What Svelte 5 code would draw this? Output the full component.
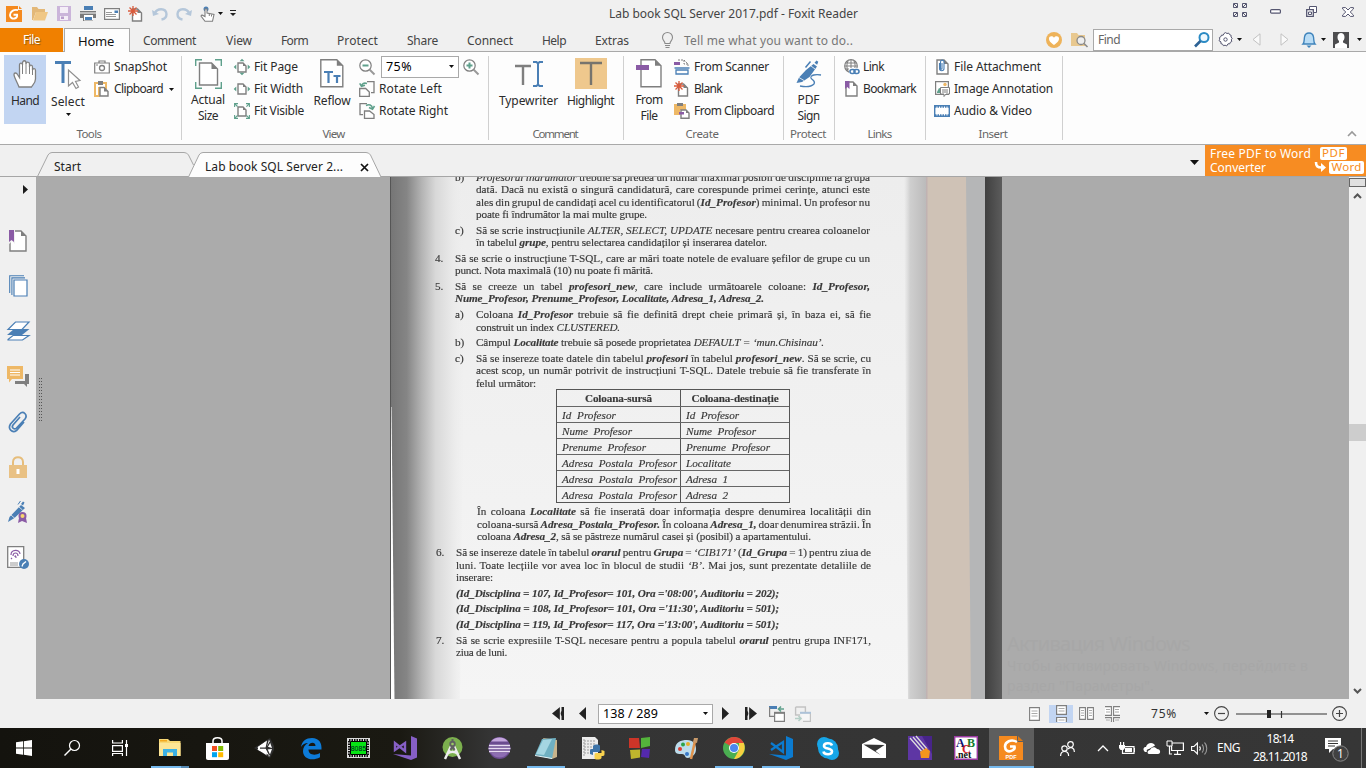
<script>
  const G = '#7f7f7f', B = '#4a7fb5', P = '#8a5ba5', T = '#5fa08c', O = '#eeb866';
  const page = (x, y, w, h, f = 5) =>
    `<path d="M${x} ${y}h${w - f}l${f} ${f}v${h - f}h${-w}z" fill="#fff" stroke="${G}" stroke-width="1.4"/><path d="M${x + w - f} ${y}v${f}h${f}z" fill="${G}"/>`;
  const caret = '<path d="M0 0h5L2.5 3z" fill="#111"/>';

  // name: [width, height, markup]
  const icons = {
    caret: [5, 3, caret],
    logo: [16, 16, `<path d="M0 0h12v4h4v12H0z" fill="#f58a1f"/><path d="M13 0l3 3h-3z" fill="#f58a1f"/><path d="M12 4.2C8 3 4 5.500 4 9c0 2.500 2 4 4.500 3.500 2-.4 3-2 2.600-3.800H7.500" fill="none" stroke="#fff" stroke-width="1.900"/>`],
    open: [16, 16, `<path d="M0 1h5l1.500 2H13v3H4L1 14H0z" fill="#e3b878"/><path d="M4 6h12l-3 8.500H1z" fill="#f0c785"/>`],
    save: [15, 15, `<path d="M1 0h14v15H1z" fill="#cbb5da"/><path d="M4 1h8v6H4zM4 10h8v4H4z" fill="#f4eef7"/><path d="M5 10.500h3V13H5z" fill="#b99dcb"/>`],
    print: [16, 16, `<path d="M4 0h9v4H4z" fill="#4a7fb5"/><path d="M0 5h16v7h-3v3H3v-3H0z" fill="#7a7a7a"/><path d="M4 9h9v5.500H4z" fill="#fff"/><path d="M5 11h7v3H5z" fill="#4a7fb5"/><path d="M0 7h16" stroke="#fff"/>`],
    mail: [16, 12, `<path d="M.6.600h14.800v10.800H.6z" fill="#fff" stroke="${G}" stroke-width="1.200"/><path d="M10.500 2.500H14V5h-3.500z" fill="${B}"/><path d="M2 4.500h6M2 6.500h10M2 8.500h10" stroke="#999"/>`],
    newdoc: [15, 16, page(4.5, 3, 9, 12, 4) + `<path d="M0 5h10M5 0v10M1.500 1.500l7 7M8.500 1.500l-7 7" stroke="#d95b3c" stroke-width="1.300"/>`],
    undo: [16, 16, `<path d="M3 7C5 2 14 1.500 14.500 8c0 3-2 5-5 5.500" fill="none" stroke="#b5c7da" stroke-width="2.400"/><path d="M0 4l1 6 6-2z" fill="#b5c7da"/>`],
    redo: [16, 16, `<path d="M13 7C11 2 2 1.500 1.500 8c0 3 2 5 5 5.500" fill="none" stroke="#b5c7da" stroke-width="2.400"/><path d="M16 4l-1 6-6-2z" fill="#b5c7da"/>`],
    touch: [15, 16, `<circle cx="6" cy="3" r="2.500" fill="${B}"/><path d="M5 3v7.500L2 9 1 10l4 5.300h7.500L14 8.500 7 7V3z" fill="#fff" stroke="${G}" stroke-width="1.100"/><path d="M9.300 8v2M11.500 8.500v2" stroke="${G}"/>`],
    custom: [6, 7, '<path d="M0 .5h6" stroke="#222"/><path d="M0 3h6L3 6z" fill="#222"/>'],
    full: [14, 14, '<g fill="none" stroke="#555670" stroke-width="1"><path d="M.5.500h4v4h-4zM9.500.500h4v4h-4zM.5 9.500h4v4h-4zM9.500 9.500h4v4h-4zM1 1l3 3M13 1l-3 3M1 13l3-3M13 13l-3-3"/></g>'],
    min: [11, 5, '<rect x=".6" y=".6" width="9.800" height="3.600" rx="1" fill="#fff" stroke="#555670" stroke-width="1.200"/>'],
    restore: [11, 11, '<path d="M3.500 3V.5h7v6H8" fill="#fff" stroke="#555670"/><path d="M.7 3.700h6.600v6.600H.7z" fill="#fff" stroke="#555670" stroke-width="1.300"/><path d="M2.500 6h3v2.500h-3z" fill="none" stroke="#555670"/>'],
    close: [12, 10, '<path d="M.6.600h3L6 3 8.400.600h3V2L8.200 5l3.200 3v1.400h-3L6 7 3.600 9.400h-3V8L3.800 5 .6 2z" fill="#fff" stroke="#555670"/>'],
    bulb: [13, 17, '<path d="M4 11.500C4 9 1.500 8.500 1.500 5.500a5 5 0 0 1 10 0C11.500 8.500 9 9 9 11.500zM4 13.500h5M4.500 15.500h4" fill="none" stroke="#8a8a8a" stroke-width="1.100"/>'],
    heart: [16, 16, '<circle cx="8" cy="8" r="8" fill="#eeb35a"/><path d="M8 13C4 10 3 8.500 3 6.500 3 4 6.500 3.500 8 5.800 9.500 3.500 13 4 13 6.500 13 8.500 12 10 8 13z" fill="#fff"/>'],
    fsearch: [17, 16, '<path d="M0 1h6l1.500 2H14v11H0z" fill="#e8c88f"/><circle cx="10" cy="8.500" r="4" fill="#eee" stroke="#8a8a8a" stroke-width="1.300"/><path d="M13 11.500l3.500 3.500" stroke="#8a8a8a" stroke-width="1.600"/>'],
    find: [16, 16, '<circle cx="10" cy="5.500" r="4.500" fill="#eff8fe" stroke="#2a8ac4" stroke-width="2"/><path d="M6.500 9L1 14.500" stroke="#2d6295" stroke-width="2.600"/>'],
    gear: [15, 15, '<path d="M6 1.500L7.500.600 9 1.500l1.700-.4.8 1.500 1.600.7-.1 1.700 1.200 1.300-.9 1.500.5 1.700-1.500.8-.6 1.600-1.700-.1L8.600 14l-1.500-.8-1.700.5-.8-1.500-1.700-.6.1-1.700L1 8.700l.8-1.500-.4-1.700 1.500-.8.600-1.600 1.700.1z" fill="#fff" stroke="#555670" stroke-width="1"/><circle cx="7.500" cy="7.500" r="1.700" fill="none" stroke="#555670"/>'],
    triL: [9, 13, '<path d="M8 .8v11.400L1 6.500z" fill="#fafafa" stroke="#c2c2c2"/>'],
    triR: [9, 13, '<path d="M1 .8v11.400l7-5.700z" fill="#fafafa" stroke="#c2c2c2"/>'],
    bell: [14, 16, '<path d="M1 12c1.500-1.500 1-4 1.500-7 .4-2.500 2-4 4.500-4s4.100 1.500 4.500 4c.5 3 0 5.500 1.500 7z" fill="#b9dcf5" stroke="#3e83bb" stroke-width="1.400"/><path d="M4.500 13.500h5L7 16z" fill="#3e83bb"/>'],
    avatar: [16, 16, '<path d="M0 0h16v16H0z" fill="#4d4d4f"/><path d="M4.500 5C4.500-.2 11.500-.2 11.500 5c0 2-.6 3.200-1.500 4v1.500l4 2V16H2v-3.500l4-2V9c-.9-.8-1.500-2-1.500-4z" fill="#fff"/>'],
    hand: [24, 28, '<path d="M6 27C4 22 1 17 1 14.500c0-2 2.500-2 3.500 0l2 3V5c0-2.500 3-2.500 3 0V3c0-3 3.500-3 3.500 0v1c0-2.500 3.500-2.500 3.500 0v3c0-2.500 3-2.500 3 0v3c.5-2 3-2 3 .5V19c0 4-3 6-4 8z" fill="#fff" stroke="#808080" stroke-width="1.300"/><path d="M9.500 5v9M13 3.500V14M16.500 5v9M19.500 8v7" fill="none" stroke="#808080"/>'],
    select: [26, 28, `<path d="M0 1.500h16M8 1.500V22" stroke="${B}" stroke-width="3" fill="none"/><path d="M13.500 9v16l4-3.500 3.500 6 2.500-1.500-3-5.500 4.500-1z" fill="#fff" stroke="#8f8f8f" stroke-width="1.200"/>`],
    camera: [16, 14, `<path d="M.7 3h14.600v10H.7zM5 3V1h6v2" fill="#fff" stroke="${G}" stroke-width="1.200"/><circle cx="8" cy="8" r="2.500" fill="none" stroke="${G}" stroke-width="1.300"/><path d="M2 5h2" stroke="${G}"/>`],
    clip: [15, 16, `<path d="M1 2h11v5H5v8H1z" fill="#fff" stroke="${O}" stroke-width="2"/><path d="M4 0h5v4H4z" fill="${G}"/>` + page(6, 6.5, 8, 8.5, 4)],
    actual: [27, 30, `<path d="M.7 7V.7H7M20 .7h6.300V7M26.300 23v6.300H20M7 29.300H.7V23" fill="none" stroke="${T}" stroke-width="1.400"/>` + page(4.5, 4, 18, 22, 6)],
    fitpage: [16, 16, page(4, 4, 8, 9, 3) + `<path d="M8-.3l2.500 2.600h-5zM8 16.300l2.500-2.600h-5zM-.3 8l2.600-2.500v5zM16.300 8l-2.600-2.500v5z" fill="${T}"/>`],
    fitwidth: [16, 16, page(4, 3, 8, 10, 3) + `<path d="M-.3 8l2.600-2.500v5zM16.300 8l-2.600-2.500v5z" fill="${T}"/>`],
    fitvis: [16, 16, page(4, 4, 8, 9, 3) + `<path d="M.6 4V.6H4M.6.600L3.500 3.500M12 .6h3.400V4M15.400.600l-3 3M.6 12v3.400H4M.6 15.400l3-3M12 15.400h3.400V12M15.400 15.400l-3-3" fill="none" stroke="${T}" stroke-width="1.100"/>`],
    reflow: [24, 29, page(.8, .8, 22, 27, 6) + `<path d="M4 13h9M8.500 13v11M13.500 17h7M17 17v7" stroke="${B}" stroke-width="2.200"/>`],
    zout: [16, 16, `<circle cx="6.500" cy="6.500" r="5.700" fill="#fff" stroke="${G}" stroke-width="1.200"/><path d="M3.500 6.500h6" stroke="${T}" stroke-width="2"/><path d="M10.500 10.500l5 5" stroke="#999" stroke-width="2"/>`],
    zin: [16, 16, `<circle cx="6.500" cy="6.500" r="5.700" fill="#fff" stroke="${G}" stroke-width="1.200"/><path d="M3.500 6.500h6M6.500 3.500v6" stroke="${T}" stroke-width="2"/><path d="M10.500 10.500l5 5" stroke="#999" stroke-width="2"/>`],
    rotl: [16, 16, `<path d="M8 .7h7v11h-3" fill="none" stroke="${G}" stroke-width="1.300"/><path d="M.7 7.500h6l3.600 3.500v4.300H.7z" fill="#fff" stroke="${G}" stroke-width="1.300"/><path d="M2.500 5C3 2.500 5 1.500 8 2.500M.7 2.300l1.800 3L6 4.300" fill="none" stroke="${T}" stroke-width="1.600"/>`],
    rotr: [16, 16, `<path d="M8 .7H1v11h3" fill="none" stroke="${G}" stroke-width="1.300"/><path d="M5.500 8h5l4.500 3.500v3.800H5.500z" fill="#fff" stroke="${G}" stroke-width="1.300"/><path d="M7 2.500c3-1.500 6-1 6.500 3M10 4.500l3.500 1.800L15.500 3" fill="none" stroke="${T}" stroke-width="1.600"/>`],
    typew: [28, 26, `<path d="M0 5h16M8 5v19" stroke="${G}" stroke-width="2.400"/><path d="M23 1v24M18 1h3.500L23 2.500 24.500 1H28M18 25h3.500l1.500-1.500 1.500 1.500H28" fill="none" stroke="${B}" stroke-width="2"/>`],
    high: [32, 31, `<path d="M0 0h32v31H0z" fill="#efc88d"/><path d="M5 5h22M16 5v22" stroke="#77746d" stroke-width="2.400"/>`],
    fromfile: [26, 29, page(5, .8, 20, 27, 6) + `<path d="M0 6h13v5H0z" fill="${P}"/>`],
    scanner: [16, 16, `<path d="M4 1h6l4 4v2M10 1v4h4" fill="none" stroke="${G}" stroke-dasharray="2 1"/><path d="M0 3h6v3H0z" fill="${P}"/><path d="M.5 9h15M2 15V11h12v4zM.5 9h15" fill="none" stroke="${B}" stroke-width="1.300"/>`],
    fromclip: [16, 16, `<path d="M0 1h12v6H6v5H0z" fill="${O}"/><path d="M3 0h6v3H3z" fill="${G}"/>` + page(7, 7, 8, 8.300, 3) + `<path d="M5 9h5v2.500H5z" fill="${P}"/>`],
    sign: [26, 28, `<path d="M17.500 4l3.500 2.500-7.500 10.500-7.500 5-5.500 1 2.500-5.500 7-7.500zM18.500 2.800l2-2.300 1.800 1.200-1.200 3z" fill="${B}"/><path d="M3 17.500l5 3M15 6l4 3" stroke="#fff" stroke-width=".8"/><path d="M9.500 7.500L14.500 1.500" stroke="${B}" stroke-width="1.500"/><path d="M25 15c-5-1-11 0-10 3 1 2 5 3 3 6-3 3-9 3-14 2" fill="none" stroke="${B}" stroke-width="1.300"/>`],
    link: [17, 16, `<circle cx="8" cy="7" r="6.300" fill="#fff" stroke="${G}" stroke-width="1.200"/><path d="M8 1v12M2 7h12M3 4h10M3 10h10M5 2C3.500 5 3.500 9 5 12M11 2c1.500 3 1.500 6 0 10" fill="none" stroke="${G}"/><path d="M6 9h11v7H6z" fill="#fff"/><rect x="7" y="10.500" width="5" height="4" rx="2" fill="none" stroke="${B}" stroke-width="1.600"/><rect x="11" y="10.500" width="5" height="4" rx="2" fill="none" stroke="${B}" stroke-width="1.600"/>`],
    bookmark: [15, 16, page(3, 1, 11, 14, 4) + `<path d="M2 0h4.500v8L4.200 6 2 8z" fill="${P}"/>`],
    attach: [15, 16, page(3, 1, 11, 14, 4) + `<path d="M5.500 4v5.500c0 3 4.500 3 4.500 0V3c0-2.500-3.500-2.500-3.500 0v6.500c0 1 1.500 1 1.500 0V4" fill="none" stroke="${B}" stroke-width="1.100"/>`],
    image: [16, 16, `<path d="M1.600.600h12.800v12.800H1.600z" fill="#fff" stroke="${G}" stroke-width="1.200"/><path d="M3 11l2-4 3 1v4H3z" fill="${T}"/><circle cx="11" cy="3.500" r="1.700" fill="${O}"/><path d="M6.500 6.500h9v6.500H12l-2 2.500V13H6.500z" fill="#fff" stroke="${G}"/><path d="M8 9h6M8 11h6" stroke="${G}"/>`],
    video: [16, 12, `<path d="M.7.700h14.600v10.600H.7z" fill="#fff" stroke="${B}" stroke-width="1.400"/><path d="M1 1.800h14M1 10.200h14" stroke="${B}" stroke-width="2" stroke-dasharray="1.500 1"/>`],
    chev: [10, 6, '<path d="M1 5l4-4 4 4" fill="none" stroke="#999" stroke-width="1.600"/>'],
    play: [5, 9, '<path d="M0 0l5 4.500L0 9z" fill="#1c1c1c"/>'],
    sbook: [18, 22, page(1, 1, 16, 20, 5) + `<path d="M0 0h6v14L3 11 0 14z" fill="#f0f0f0"/><path d="M0 0h5v12l-2.500-2L0 12z" fill="${P}"/>`],
    spages: [19, 22, `<path d="M.7 18V.7H15M2.900 20V2.900H16" fill="none" stroke="${B}" stroke-width="1.100"/><path d="M5 5h13v16H5z" fill="#fff" stroke="${B}" stroke-width="1.200"/>`],
    slayers: [23, 20, `<path d="M1 18.500l5-4h16l-6.500 4.500H1z" fill="#fff" stroke="${B}" stroke-width="1.200"/><path d="M0 14l7-6h15.500L15 14z" fill="${B}"/><path d="M1 8.500L8.500 1H22l-7 7.500z" fill="#fff" stroke="${B}" stroke-width="1.200"/>`],
    scomm: [22, 21, `<path d="M18 8h4v10h-2v3l-3-3H8v-3h10z" fill="${G}"/><path d="M0 0h16v13H5l-3 3.500V13H0z" fill="${O}"/><path d="M3 4h10M3 6.500h10M3 9h10" stroke="#fff"/>`],
    sclip: [20, 22, `<path d="M12 6l-7 8c-2 3 1.500 5 3.500 3L17 8c3-4-1.500-9-5.500-5L2.500 13C-.5 17.500 4 22.500 8.500 19.500L16 11" fill="none" stroke="${B}" stroke-width="1.700"/>`],
    slock: [18, 22, `<path d="M4 10V6c0-6.500 10-6.500 10 0v4" fill="none" stroke="#e6bd7b" stroke-width="2"/><path d="M0 9h18v13H0z" fill="#e9c184"/><path d="M7.500 13h3v5h-3z" fill="#fff"/>`],
    ssign: [20, 22, `<path d="M0 21l1.500-5L13 4l4 3L6.500 17zM13 3l2-2.500 1.500 1-1.500 3z" fill="${B}"/><path d="M10 3.500L12.500 0" stroke="${B}"/><path d="M3 14l4 3.500M11 6l3.500 3" stroke="#f0f0f0" stroke-width=".8"/><path d="M11 17l-1 5 4-2 5 2-1-5z" fill="${P}"/><circle cx="14.500" cy="15" r="4" fill="${P}"/><circle cx="14.500" cy="15" r="2" fill="#f7d56f"/>`],
    sfinger: [22, 23, `<path d="M.7.700h16v20.600h-16z" fill="#fff" stroke="${G}" stroke-width="1.300"/><path d="M4 9c0-6 9-6 9-1M6 10c0-4 5-4 5 0M8 11c0-2 1-1 1 1M4 12l1 1" fill="none" stroke="${P}" stroke-width="1.200"/><path d="M3 17h8M3 19h8" stroke="#999"/><circle cx="17" cy="18" r="5" fill="${B}"/><path d="M15 20.500l1-2.500 3-2.500" stroke="#fff" stroke-width="1.300" fill="none"/>`],
    xclose: [9, 9, '<path d="M1 1l7 7M8 1L1 8" stroke="#111" stroke-width="1.700"/>'],
    bigcaret: [9, 5, '<path d="M0 0h9L4.500 5z" fill="#111"/>'],
    bend: [11, 12, '<path d="M1 1c0 4 1 5.500 6 5.500" fill="none" stroke="#fff" stroke-width="2.600"/><path d="M6 2l5 4.500L6 11z" fill="#fff"/>'],
    first: [12, 13, '<path d="M8 0v13L0 6.500zM12 0v13H9.500V9L8 6.500 9.500 4V0z" fill="#222"/><path d="M8.300 0v13" stroke="#f0f0f0" stroke-width=".8"/>'],
    prev: [7, 13, '<path d="M7 0v13L0 6.500z" fill="#222"/>'],
    next: [7, 13, '<path d="M0 0v13l7-6.500z" fill="#222"/>'],
    last: [12, 13, '<path d="M4 0v13l8-6.500zM0 0v13h2.500V9L4 6.500 2.500 4V0z" fill="#222"/><path d="M3.700 0v13" stroke="#f0f0f0" stroke-width=".8"/>'],
    vprev: [16, 16, `<path d="M0 0h8v3H0z" fill="${B}"/><path d="M.6 1v9.400H5" fill="none" stroke="${G}" stroke-width="1.200"/><path d="M5.600 6.600h9.800v8.800H5.600z" fill="#fff" stroke="${G}" stroke-width="1.200"/><path d="M5 6.800h11" stroke="${G}" stroke-width="2"/><path d="M15 3H9.500M12 .5L9.500 3 12 5.500" fill="none" stroke="${T}" stroke-width="1.600"/>`],
    vnext: [16, 16, `<g opacity=".4"><path d="M.6 1h9.800v5M.6 1v8H5" fill="none" stroke="${G}" stroke-width="1.400"/><path d="M5.600 6.600h9.800v8.800H8" fill="#fff" stroke="${G}" stroke-width="1.200"/><path d="M5 6.800h11" stroke="${B}" stroke-width="2"/><path d="M0 12.500h6M3.500 10L6 12.500 3.500 15" fill="none" stroke="${T}" stroke-width="1.600"/></g>`],
    v1: [11, 14, `<path d="M.6.600h9.800v12.800H.6z" fill="#fff" stroke="${G}" stroke-width="1.100"/><path d="M2.500 4h6M2.500 6.500h6M2.500 9h6" stroke="#aaa"/>`],
    v2: [11, 17, `<path d="M.6.600h9.800v8.800H.6zM.6 17v-4.500h9.800V17" fill="#fff" stroke="${G}" stroke-width="1.200"/><path d="M2.500 3.500h6M2.500 6h6M2.500 15h6" stroke="#aaa"/>`],
    v3: [15, 13, `<path d="M.6.600h5.800v11.800H.6zM8.600.600h5.800v11.800H8.600z" fill="#fff" stroke="${G}" stroke-width="1.100"/><path d="M2 3.500h3M2 6h3M2 8.500h3M10 3.500h3M10 6h3M10 8.500h3" stroke="#aaa"/>`],
    v4: [15, 16, `<path d="M0 .6h6.400v8.800H0M15 .6H8.600v8.800H15M0 11.600h6.400V16M15 11.600H8.600V16" fill="#fff" stroke="${G}" stroke-width="1.100"/><path d="M1 3.500h4M1 6h4M10 3.500h4M10 6h4M1 14h4M10 14h4" stroke="#aaa"/>`],
    minus: [15, 15, '<circle cx="7.500" cy="7.500" r="6.900" fill="none" stroke="#444" stroke-width="1.100"/><path d="M4 7.500h7" stroke="#444" stroke-width="1.200"/>'],
    plus: [15, 15, '<circle cx="7.500" cy="7.500" r="6.900" fill="none" stroke="#444" stroke-width="1.100"/><path d="M4 7.500h7M7.500 4v7" stroke="#444" stroke-width="1.200"/>'],
    slider: [91, 9, '<path d="M0 5h91" stroke="#333" stroke-width="1.200"/><path d="M31 1h4v8h-4z" fill="#222"/><path d="M45.500 2v7" stroke="#333" stroke-width="1.200"/>'],
    up: [9, 6, '<path d="M1 5l3.500-3.500L8 5" fill="none" stroke="#555" stroke-width="2"/>'],
    down: [9, 6, '<path d="M1 1l3.500 3.500L8 1" fill="none" stroke="#555" stroke-width="2"/>'],
    win: [16, 16, '<path d="M0 2.300L7 1.300v6.300H0zM7.800 1.200L16 0v7.600H7.800zM0 8.400h7v6.300l-7-1zM7.800 8.400H16V16l-8.200-1.200z" fill="#fff"/>'],
    wsearch: [16, 16, '<circle cx="10.500" cy="5.500" r="5" fill="none" stroke="#fff" stroke-width="1.200"/><path d="M7 9L.5 15.500" stroke="#fff" stroke-width="1.400"/>'],
    tview: [17, 16, '<path d="M.6 0v3h9.800V0M.6 5.600h9.800v5.800H.6zM.6 16v-2.500h9.800V16M14.500 0v16" fill="none" stroke="#fff" stroke-width="1.200"/><path d="M13 4h3v3h-3z" fill="#fff"/>'],
    explorer: [22, 18, '<path d="M0 0h9l2 2h10.500v15H0z" fill="#f7d774"/><path d="M0 4h21.500v13H0z" fill="#fde595"/><path d="M1 1h7v1.500H1z" fill="#f3a91e"/><path d="M4 17v-7h14v7h-4v-3.500H8V17z" fill="#3db1e5"/>'],
    store: [23, 23, '<path d="M7 7V4c0-4.500 9-4.500 9 0v3" fill="none" stroke="#fff" stroke-width="1.500"/><path d="M0 6h23v15c0 1-.6 2-2 2H2c-1.400 0-2-1-2-2z" fill="#fff"/><path d="M6 9h5v5H6z" fill="#f25022"/><path d="M12.200 9h5v5h-5z" fill="#7fba00"/><path d="M6 15.200h5v5H6z" fill="#00a4ef"/><path d="M12.200 15.200h5v5h-5z" fill="#ffb900"/>'],
    unity: [20, 20, '<path d="M0 10L16 0l4 8v4l-4 8z" fill="#2e2e2e"/><path d="M3 9.500L13 2.500l-3 6.500zM15 1.500l3 8.500-5-1.500zM3 11l7 0 3 6.500zM13 11.500l5-.5-3 8z" fill="#fff"/><path d="M4 9l9-6 -1.500 7L15 17 4 12z" fill="#fff"/><path d="M6 10.200h6.500L16 4M12.500 10.200L15.500 17" fill="none" stroke="#2e2e2e" stroke-width="1.300"/>'],
    edge: [21, 21, '<path d="M0 9C1 3 5 0 11 0c7 0 10 5 9.500 11.500H7.500C7.500 17 14 18 19 15v4.300C11 23.500 2 21 2 13c0-3.500 2-6.500 5-8-3 0-5.500 1.500-7 4zM7.500 8h7C14.500 3.500 8.500 4 7.500 8z" fill="#0d7bd8"/>'],
    chip: [23, 20, '<path d="M0 0h23v20H0z" fill="#ddd"/><path d="M2 2h19v16H2z" fill="none" stroke="#111" stroke-width="2" stroke-dasharray="1.500 1"/><path d="M3.500 3.500h16v13h-16z" fill="#07e314" stroke="#000"/><text x="11.500" y="12.500" font-family="Liberation Sans" font-size="7" text-anchor="middle" fill="#012">8085</text>'],
    vs: [24, 24, '<path d="M18 0l6 2.500v19L18 24 0 18l18 1.500z" fill="#865fc5"/><path d="M2 7v7l10-7v8z" fill="none" stroke="#865fc5" stroke-width="2.400"/>'],
    android: [21, 23, '<circle cx="10.500" cy="10" r="10" fill="#7cb04e"/><path d="M10 7L3 22M11 7l7 15M5 17c3-3 8-3 11 0" fill="none" stroke="#eee" stroke-width="2.500"/><path d="M10.500 2v10M8.500 13l2-4 2 4" stroke="#616161" stroke-width="2" fill="none"/><circle cx="10.500" cy="7" r="3.200" fill="#616161"/><circle cx="10.500" cy="7" r="1.300" fill="#9ccc65"/>'],
    eclipse: [23, 22, '<circle cx="11.500" cy="11" r="11" fill="#6b4b90"/><path d="M3 4.500C7-1 16-1 20 4.500z" fill="#c4a6dd"/><path d="M1 8.500h21M.5 11.500h22M1 14.500h21" stroke="#e8dcf2" stroke-width="1.400"/><path d="M3 16c4 6 13 6 17 0z" fill="#8d6db2"/>'],
    notepad: [23, 22, '<path d="M8 1l14 2v17l-5 2z" fill="#c8b48c"/><path d="M7 2l14-1-4 21-17-4z" fill="#6fb0c2"/><path d="M8 3l9-1-8 16-8-1z" fill="#a5d6e2"/><path d="M0 18l17 3v1L0 19z" fill="#e7f6fa"/>'],
    python: [23, 23, '<path d="M0 0h13l3 3v19H0z" fill="#ececec"/><path d="M2 2v18M2 4h12M2 7h12M2 10h12M2 13h8M2 16h8" stroke="#9b9b9b" stroke-dasharray="2 1"/><path d="M8 17v-3c0-2 1-2 3-2V9c1-2 7-2 7 0v4c0 2-1 2-3 2h-4v3z" fill="#3e74a8"/><path d="M22.500 14v3c0 2-1 2-3 2v2c-1 2-7 2-7 0v-3c0-2 1-2 3-2h4v-3z" fill="#f8d24e"/>'],
    blocks: [22, 22, '<path d="M0 1l10 0 1 10H0z" fill="#cc3528"/><path d="M12 1l9-1v9l-9 2z" fill="#54b43b"/><path d="M1 13l10-.5v8L2 22z" fill="#beb52d"/><path d="M13 12h8l-1 9-8-1z" fill="#5429ad"/>'],
    paint: [24, 23, '<path d="M0 13C0 5 6 3 12 3s9 4 9 9-3 8-8 9c-4 0-2-4-6-4S0 17 0 13z" fill="#bcdcec"/><circle cx="5" cy="12" r="2" fill="#d83c31"/><circle cx="8" cy="7.500" r="2" fill="#2ba34a"/><circle cx="13" cy="7" r="2" fill="#e6ae2c"/><circle cx="12" cy="17" r="2" fill="#3778c8"/><path d="M20 4l-4 18" stroke="#e0934d" stroke-width="2.500"/><path d="M18 5l1-4 4 0-1 5z" fill="#c99a6a"/>'],
    chrome: [22, 22, '<circle cx="11" cy="11" r="11" fill="#4aae51"/><path d="M11 11L1.500 5.500C6-2 17-2 20.800 6H11z" fill="#e0473a"/><path d="M11 22l5-9 0-7h4.800C24 14 18 22 11 22z" fill="#f8cf40"/><circle cx="11" cy="11" r="5" fill="#fff"/><circle cx="11" cy="11" r="4" fill="#4c87ee"/>'],
    vscode: [24, 24, '<path d="M17 0l7 3v18l-7 3L0 18l17 1.500z" fill="#0b7bd0"/><path d="M2 7l12 9V6L2 14" fill="none" stroke="#0b7bd0" stroke-width="2.200"/>'],
    skype: [22, 23, '<circle cx="7" cy="7" r="7" fill="#17a6e8"/><circle cx="15" cy="16" r="7" fill="#17a6e8"/><circle cx="11" cy="11.500" r="10" fill="#17a6e8"/><path d="M15 8.500c-1-3-8-3-8 .5 0 3.500 8 1.500 8 5.500 0 4-8 3.500-8.500 0" fill="none" stroke="#fff" stroke-width="2.600"/>'],
    wmail: [24, 20, '<path d="M0 6l12-6 12 6v14H0z" fill="#fff"/><path d="M1.500 6.500l21 .5-9 6 5 4z" fill="#343434"/>'],
    purple: [24, 24, '<path d="M0 0h24v24H0z" fill="#5e36a4"/><path d="M0 0h14l10 18V0z" fill="#472489"/><path d="M2 2l13 15M5 1l12 14M8 0l11 13" fill="none" stroke="#ddd" stroke-width="1.300"/><path d="M12 16l6-4 4 3-1 7h-8z" fill="#f4951d"/>'],
    abc: [24, 24, '<path d="M.7.700h22.600v22.600H.7z" fill="#fff" stroke="#9a3aa2" stroke-width="1.400"/><g font-family="Liberation Serif" font-weight="bold"><text x="2" y="10.500" font-size="12" fill="#101070">A</text><text x="13" y="10.500" font-size="12" fill="#157a2e">B</text><text x="8" y="17" font-size="12" fill="#d0202a">C</text><text x="1.500" y="22" font-size="10" fill="#111">.net</text></g>'],
    foxit: [24, 24, '<path d="M0 0h18v6h6v18H0z" fill="#f58a1f"/><path d="M19 0l5 5h-5z" fill="#d97818"/><path d="M18 6C12 2.500 6 6 6 10.500c0 4 3 5.500 6 4.500 3-1 4-3 3.500-4.500H11" fill="none" stroke="#fff" stroke-width="2.600"/><text x="12" y="22.500" font-family="Liberation Sans" font-weight="bold" font-size="5.500" text-anchor="middle" fill="#fff">PDF</text>'],
    people: [15, 15, '<g fill="none" stroke="#fff" stroke-width="1.200"><circle cx="4.500" cy="7.500" r="2.700"/><path d="M.6 15c0-6 8-6 8 0"/><circle cx="10.500" cy="3.500" r="2.800"/><path d="M8 8c3-3 6.400-1 6.400 3"/></g>'],
    tchev: [12, 7, '<path d="M1 6l5-5 5 5" fill="none" stroke="#fff" stroke-width="1.300"/>'],
    batt: [16, 13, '<path d="M5 4.600h10v6.800H3.500V8" fill="none" stroke="#fff" stroke-width="1.200"/><path d="M6 6h7v4H6zM15 6h1v4h-1zM0 3h6v3L4.500 8h-3L0 6zM1 0h1.200v3H1zM4 0h1.200v3H4z" fill="#fff"/>'],
    cloud: [17, 11, '<path d="M2 9C-1 6 1 4 3 4c1-5 8-5 9-1.500L6 6c-2 0-3 2-2 3z" fill="#fff"/><path d="M6 11c-2 0-2-4 1-4 1-3 5-4 7-1 4 0 4 5 1 5z" fill="#fff"/>'],
    net: [17, 14, '<path d="M4.600 2h11.800v7.500H4.600zM10.500 10v3M7 13.400h7M2.500 5v8H5" fill="none" stroke="#fff" stroke-width="1.200"/><path d="M0 0h5v5H0z" fill="#333" stroke="#fff"/>'],
    vol: [17, 13, '<path d="M.6 4.500h2.400L6.400 1v11L3 8.500H.6z" fill="none" stroke="#fff" stroke-width="1.100"/><path d="M8.500 4.500c1 1 1 3 0 4" fill="none" stroke="#fff" stroke-width="1.200"/><path d="M11 2.500c2 2 2 6 0 8M13.500.500c3 3 3 9 0 12" fill="none" stroke="#999" stroke-width="1.100"/>'],
    action: [24, 24, '<path d="M0 0h16v11H8l-4 4v-4H0z" fill="#fff"/><path d="M3 3h10M3 5.500h10M3 8h7" stroke="#343434"/><circle cx="15.500" cy="15.500" r="7.700" fill="#414141" stroke="#888"/><text x="15.500" y="19.500" font-family="Open Sans" font-size="12" text-anchor="middle" fill="#fff">1</text>'],
  };

  // Spreads a run of text over a given width, between words or between letters.
  function fit(node, [width, words]) {
    if (!width) return;
    const gap = width - node.getBoundingClientRect().width;
    const text = node.textContent.trim();
    if (words) node.style.wordSpacing = gap / (text.split(' ').length - 1) + 'px';
    else node.style.letterSpacing = gap / text.length + 'px';
  }

  const menu = [['Comment', 53], ['View', 26], ['Form', 27], ['Protect', 41], ['Share', 31], ['Connect', 46], ['Help', 24], ['Extras', 34]];

  const doc = [
    { lvl: 2, n: 'b)', lines: [
      ['<i>Profesorul îndrumător</i> trebuie să predea un număr maximal posibil de discipline la grupa', 394, 1],
      ['dată. Dacă nu există o singură candidatură, care corespunde primei cerințe, atunci este', 394, 1],
      ['ales din grupul de candidați acel cu identificatorul (<b><i>Id_Profesor</i></b>) minimal. Un profesor nu', 394, 1],
      ['poate fi îndrumător la mai multe grupe.', 171]] },
    { lvl: 2, n: 'c)', lines: [
      ['Să se scrie instrucțiunile <i>ALTER, SELECT, UPDATE</i> necesare pentru crearea coloanelor', 394, 1],
      ['în tabelul <b><i>grupe</i></b>, pentru selectarea candidaților și inserarea datelor.', 291]] },
    { lvl: 1, n: '4.', lines: [
      ['Să se scrie o instrucțiune T-SQL, care ar mări toate notele de evaluare șefilor de grupe cu un', 415, 1],
      ['punct. Nota maximală (10) nu poate fi mărită.', 198]] },
    { lvl: 1, n: '5.', lines: [
      ['Să se creeze un tabel <b><i>profesori_new</i></b>, care include următoarele coloane: <b><i>Id_Profesor,</i></b>', 415, 1],
      ['<b><i>Nume_Profesor, Prenume_Profesor, Localitate, Adresa_1, Adresa_2.</i></b>', 309]] },
    { lvl: 2, n: 'a)', lines: [
      ['Coloana <b><i>Id_Profesor</i></b> trebuie să fie definită drept cheie primară și, în baza ei, să fie', 395, 1],
      ['construit un index <i>CLUSTERED.</i>', 144]] },
    { lvl: 2, n: 'b)', lines: [['Câmpul <b><i>Localitate</i></b> trebuie să posede proprietatea <i>DEFAULT = ‘mun.Chisinau’.</i>', 348]] },
    { lvl: 2, n: 'c)', lines: [
      ['Să se insereze toate datele din tabelul <b><i>profesori</i></b> în tabelul <b><i>profesori_new</i></b>. Să se scrie, cu', 395, 1],
      ['acest scop, un număr potrivit de instrucțiuni T-SQL. Datele trebuie să fie transferate în', 395, 1],
      ['felul următor:', 60]] },
    { table: [['Id  Profesor', 'Id  Profesor', 54, 53], ['Nume  Profesor', 'Nume  Profesor', 70, 70], ['Prenume  Profesor', 'Prenume  Profesor', 84, 84], ['Adresa  Postala  Profesor', 'Localitate', 115, 45], ['Adresa  Postala  Profesor', 'Adresa  1', 115, 42], ['Adresa  Postala  Profesor', 'Adresa  2', 115, 42]] },
    { lvl: 2, n: '', sh: 1, lines: [
      ['În coloana <b><i>Localitate</i></b> să fie inserată doar informația despre denumirea localității din', 394, 1],
      ['coloana-sursă <b><i>Adresa_Postala_Profesor.</i></b> În coloana <b><i>Adresa_1,</i></b> doar denumirea străzii. În', 394, 1],
      ['coloana <b><i>Adresa_2</i></b>, să se păstreze numărul casei și (posibil) a apartamentului.', 334]] },
    { lvl: 1, n: '6.', sh: 1, lines: [
      ['Să se insereze datele în tabelul <b><i>orarul</i></b> pentru <b><i>Grupa</i></b> = <i>‘CIB171’</i> (<b><i>Id_Grupa</i></b> = 1) pentru ziua de', 415, 1],
      ['luni. Toate lecțiile vor avea loc în blocul de studii <i>‘B’</i>. Mai jos, sunt prezentate detaliile de', 415, 1],
      ['inserare:', 37]] },
    { lvl: 1, n: '', sh: 1, lines: [["<b><i>(Id_Disciplina = 107, Id_Profesor= 101, Ora ='08:00', Auditoriu = 202);</i></b>", 323]] },
    { lvl: 1, n: '', sh: 1, lines: [["<b><i>(Id_Disciplina = 108, Id_Profesor= 101, Ora ='11:30', Auditoriu = 501);</i></b>", 323]] },
    { lvl: 1, n: '', sh: 1, lines: [["<b><i>(Id_Disciplina = 119, Id_Profesor= 117, Ora ='13:00', Auditoriu = 501);</i></b>", 323]] },
    { lvl: 1, n: '7.', sh: 1, lines: [
      ['Să se scrie expresiile T-SQL necesare pentru a popula tabelul <b><i>orarul</i></b> pentru grupa INF171,', 415, 1],
      ['ziua de luni.', 51]] },
  ];

  const side = ['sbook', 'spages', 'slayers', 'scomm', 'sclip', 'slock', 'ssign', 'sfinger'];
  const apps = ['explorer', 'store', 'unity', 'edge', 'chip', 'vs', 'android', 'eclipse', 'notepad', 'python', 'blocks', 'paint', 'chrome', 'vscode', 'skype', 'wmail', 'purple', 'abc', 'foxit'];
  const running = ['explorer', 'notepad', 'chrome', 'vscode', 'foxit'];
</script>

{#snippet ic(name)}
  <svg class="ic" width={icons[name][0]} height={icons[name][1]} viewBox="0 0 {icons[name][0]} {icons[name][1]}">{@html icons[name][2]}</svg>
{/snippet}
{#snippet t(text, w)}<span class="t" use:fit={[w]}>{text}</span>{/snippet}
{#snippet row(icon, text, w, drop)}
  <div class="row"><span class="slot">{@render ic(icon)}</span>{@render t(text, w)}{#if drop}<span class="drop">{@render ic('caret')}</span>{/if}</div>
{/snippet}
{#snippet big(icon, a, wa, b, wb, on)}
  <div class="big" class:on>
    <span class="bigic">{@render ic(icon)}</span>
    <span class="lab">{@render t(a, wa)}</span>
    <span class="lab" class:arrow={b === 'drop'}>{#if b === 'drop'}{@render ic('caret')}{:else if b}{@render t(b, wb)}{/if}</span>
  </div>
{/snippet}

<div class="app">
  <header class="title">
    {#each ['logo', 'open', 'save', 'print', 'mail', 'newdoc', 'undo', 'redo', 'touch', 'caret', 'custom'] as n}{@render ic(n)}{/each}
    {@render t('Lab book SQL Server 2017.pdf - Foxit Reader', 249)}
    <span class="win">{@render ic('full')}</span>
    <span class="win2">{@render ic('min')}</span><span class="win2">{@render ic('restore')}</span><span class="win2">{@render ic('close')}</span>
  </header>

  <nav class="menu">
    <div class="file">{@render t('File', 17)}</div>
    <div class="home">{@render t('Home', 36)}</div>
    {#each menu as [m, w]}<span class="item">{@render t(m, w)}</span>{/each}
    {@render ic('bulb')}
    <span class="hint item">{@render t('Tell me what you want to do..', 169)}</span>
    {#each ['heart', 'fsearch'] as n}<span class="lift">{@render ic(n)}</span>{/each}
    <div class="find">{@render t('Find', 22)}{@render ic('find')}</div>
    {#each ['gear', 'caret', 'triL', 'triR', 'bell', 'caret', 'avatar', 'caret'] as n}<span class="lift">{@render ic(n)}</span>{/each}
  </nav>

  <section class="ribbon">
    <div class="group tools"><div class="body">
      {@render big('hand', 'Hand', 28, '', 0, true)}
      {@render big('select', 'Select', 34, 'drop')}
      <div class="col">{@render row('camera', 'SnapShot', 53)}{@render row('clip', 'Clipboard', 49, true)}</div>
    </div><div class="name">{@render t('Tools', 25)}</div></div>
    <div class="group view"><div class="body">
      {@render big('actual', 'Actual', 34, 'Size', 20)}
      <div class="col">{@render row('fitpage', 'Fit Page', 44)}{@render row('fitwidth', 'Fit Width', 49)}{@render row('fitvis', 'Fit Visible', 50)}</div>
      {@render big('reflow', 'Reflow', 37)}
      <div class="col">
        <div class="zoom">{@render ic('zout')}<div class="box">{@render t('75%', 26)}{@render ic('caret')}</div>{@render ic('zin')}</div>
        {@render row('rotl', 'Rotate Left', 63)}{@render row('rotr', 'Rotate Right', 69)}
      </div>
    </div><div class="name">{@render t('View', 22)}</div></div>
    <div class="group comment"><div class="body">
      {@render big('typew', 'Typewriter', 59)}{@render big('high', 'Highlight', 47)}
    </div><div class="name">{@render t('Comment', 45)}</div></div>
    <div class="group create"><div class="body">
      {@render big('fromfile', 'From', 27, 'File', 17)}
      <div class="col">{@render row('scanner', 'From Scanner', 75)}{@render row('newdoc', 'Blank', 28)}{@render row('fromclip', 'From Clipboard', 80)}</div>
    </div><div class="name">{@render t('Create', 33)}</div></div>
    <div class="group protect"><div class="body">{@render big('sign', 'PDF', 22, 'Sign', 22)}</div><div class="name">{@render t('Protect', 36)}</div></div>
    <div class="group links"><div class="body"><div class="col">{@render row('link', 'Link', 21)}{@render row('bookmark', 'Bookmark', 53)}</div></div><div class="name">{@render t('Links', 24)}</div></div>
    <div class="group insert"><div class="body"><div class="col">{@render row('attach', 'File Attachment', 87)}{@render row('image', 'Image Annotation', 99)}{@render row('video', 'Audio & Video', 78)}</div></div><div class="name">{@render t('Insert', 29)}</div></div>
    <div class="fold">{@render ic('chev')}</div>
  </section>

  <div class="tabs">
    <div class="tab start">
      <svg class="shape" width="158" height="25" viewBox="0 0 158 25"><path d="M.5 24.500L11 3Q12.500.500 15 .5H147Q150 .5 151.500 3l5 10" fill="none" stroke="#a6a6a6" /></svg>
      {@render t('Start', 27)}
    </div>
    <div class="tab cur">
      <svg class="shape" width="194" height="25" viewBox="0 0 194 25"><path d="M.5 25L11 3Q12.500.500 15 .5H178Q181 .5 182.500 3L193 25" fill="#fdfdfd" stroke="#a6a6a6" /></svg>
      {@render t('Lab book SQL Server 2...', 138)}{@render ic('xclose')}
    </div>
    <div class="more">{@render ic('bigcaret')}</div>
    <div class="ad">
      <div class="adtext">{@render t('Free PDF to Word', 101)}{@render t('Converter', 56)}</div>
      <div class="adlogo"><span class="chip pdf">{@render t('PDF', 23)}</span><span class="bend">{@render ic('bend')}</span><span class="chip word">{@render t('Word', 30)}</span></div>
    </div>
  </div>

  <main>
    <aside>
      <div class="open">{@render ic('play')}</div>
      {#each side as s}<div class="si">{@render ic(s)}</div>{/each}
    </aside>
    <div class="canvas">
      <div class="grip"></div>
      <div class="page">
        <svg class="scan" width="612" height="522" viewBox="0 0 612 522">
          <defs>
            <linearGradient id="sh"><stop offset="0" stop-color="#757575" /><stop offset=".22" stop-color="#858585" /><stop offset=".42" stop-color="#b4b4b4" /><stop offset=".6" stop-color="#d8d8d8" /><stop offset=".8" stop-color="#e8e8e8" /><stop offset="1" stop-color="#efefef" stop-opacity="0" /></linearGradient>
            <linearGradient id="rt"><stop offset="0" stop-color="#d8d8d8" stop-opacity="0" /><stop offset=".25" stop-color="#cfcfcf" /><stop offset="1" stop-color="#b9b8b8" /></linearGradient>
            <linearGradient id="dk"><stop offset="0" stop-color="#404040" /><stop offset="1" stop-color="#5c5c5c" /></linearGradient>
            <linearGradient id="pg" x2="0" y2="1"><stop offset="0" stop-color="#ededed" /><stop offset="1" stop-color="#f5f5f5" /></linearGradient>
          </defs>
          <path d="M0 0h612v522H0z" fill="url(#pg)" />
          <path d="M0 0h76l-6 522H0z" fill="url(#sh)" />
          <path d="M0 230h1.500l3 292H0z" fill="#fff" />
          <path d="M0 0h1v522H0z" fill="#555" />
          <path d="M514 0h24v522h-20z" fill="url(#rt)" />
          <path d="M537 0h44l1 522h-45z" fill="#cfc2b6" />
          <path d="M536 0h1.500v522H536z" fill="#c0b2b2" />
          <path d="M576 0h20v522h-15z" fill="#b5b6b7" />
          <path d="M595 0h17v522h-17z" fill="url(#dk)" />
        </svg>
        <div class="text">
          {#each doc as p}
            {#if p.table}
              <div class="table">
                <div class="tr th"><span>{@render t('Coloana-sursă', 67)}</span><span>{@render t('Coloana-destinație', 87)}</span></div>
                {#each p.table as r}<div class="tr"><span>{@render t(r[0], r[2])}</span><span>{@render t(r[1], r[3])}</span></div>{/each}
              </div>
            {:else}
              <div class="para" class:sub={p.lvl === 2} class:sh={p.sh}>
                <span class="num">{p.n}</span>
                <div>{#each p.lines as [h, w, j]}<div class="line"><span class="t" use:fit={[w, j]}>{@html h}</span></div>{/each}</div>
              </div>
            {/if}
          {/each}
        </div>
      </div>
      <div class="mark"><div class="m1">{@render t('Активация Windows', 183)}</div><div>{@render t('Чтобы активировать Windows, перейдите в', 301)}</div><div>{@render t('раздел "Параметры".', 147)}</div></div>
    </div>
    <div class="scroll"><div class="split"></div><div class="arr">{@render ic('up')}</div><div class="thumb"></div><div class="arr">{@render ic('down')}</div></div>
  </main>

  <footer class="status">
    {@render ic('first')}{@render ic('prev')}
    <div class="pg">{@render t('138 / 289', 55)}{@render ic('caret')}</div>
    {#each ['next', 'last', 'vprev', 'vnext', 'v1'] as n}{@render ic(n)}{/each}
    <div class="selv">{@render ic('v2')}</div>
    {@render ic('v3')}{@render ic('v4')}
    {@render t('75%', 26)}
    {#each ['caret', 'minus', 'slider', 'plus'] as n}{@render ic(n)}{/each}
  </footer>

  <div class="taskbar">
    <div class="sys">{@render ic('win')}</div><div class="sys">{@render ic('wsearch')}</div><div class="sys">{@render ic('tview')}</div>
    <div class="apps">
      {#each apps as a, i}<div class="appi" class:run={running.includes(a)} class:late={i > 13} class:active={a === 'foxit'} class:multi={a === 'explorer'}>{@render ic(a)}</div>{/each}
    </div>
    <div class="tray">
      {#each ['people', 'tchev', 'batt', 'cloud', 'net', 'vol'] as n}{@render ic(n)}{/each}
      {@render t('ENG', 23)}
      <div class="clock">{@render t('18:14', 27)}{@render t('28.11.2018', 54)}</div>
      <span class="act">{@render ic('action')}</span>
      <div class="desk"></div>
    </div>
  </div>
</div>

<style>
  :global(body) { overflow: hidden; background: #f0f0f0; }
  .app { width: 1366px; height: 768px; display: flex; flex-direction: column; background: #f0f0f0; font: 12px/16px "Noto Sans", "Open Sans", sans-serif; color: #2b2b2b; overflow: hidden; }
  .ic { display: block; flex: none; overflow: visible; }
  .t { display: inline-block; white-space: pre; justify-self: start; }
  .title { height: 27px; display: grid; align-items: center; padding-left: 6px; grid-template-columns: 26px 24px 24px 24px 24px 24px 24px 24px 18px 12px 379px 624px 37px 36px 36px 24px; color: #444; }
  .win { margin-top: -7px; }
  .win2 { margin-top: -4px; }
  .menu { height: 25px; box-sizing: border-box; border-bottom: 1px solid #a9a9a9; display: grid; align-items: center; grid-template-columns: 64px 79px 83px 55px 56px 70px 60px 75px 53px 66px 23px 362px 25px 22px 125px 19px 15px 28px 22px 19px 12px 24px 9px; color: #444; padding-top: 1px; }
  .item { padding-top: 2px; white-space: nowrap; }
  .lift { margin-top: -1px; }
  .file { width: 63px; height: 24px; margin-top: -1px; background: #f08000; color: #fff; display: grid; place-content: center; padding-top: 1px; box-sizing: border-box; text-shadow: 1px 1px 1px #8a5a10; }
  .home { box-sizing: border-box; width: 66px; height: 25px; margin-bottom: -1px; border: 1px solid #a9a9a9; border-bottom: 0; background: #fdfdfd; display: grid; place-content: center; padding-right: 2px; font-size: 13px; color: #111; align-self: end; }
  .hint { color: #777; }
  .find { box-sizing: border-box; width: 120px; height: 22px; margin-top: -1px; border: 1px solid #a9a9a9; background: #fff; display: flex; align-items: center; justify-content: space-between; padding: 0 2px 0 4px; color: #666; }
  .ribbon { height: 93px; box-sizing: border-box; border-bottom: 1px solid #a9a9a9; background: #fdfdfd; display: flex; }
  .group { position: relative; box-sizing: border-box; height: 92px; padding-top: 3px; }
  .group::after { content: ""; position: absolute; right: 0; top: 4px; width: 1px; height: 84px; background: #d0d0d0; }
  .body { height: 70px; display: grid; }
  .name { text-align: center; font-size: 11.5px; line-height: 18px; color: #666; }
  .tools { width: 182px; } .tools .body { grid-template-columns: 42px 44px 1fr; padding-left: 4px; column-gap: 2px; } .tools .name { padding-right: 4px; }
  .tools .big:nth-child(2) { width: 40px; }
  .view { width: 307px; } .view .body { grid-template-columns: 52px 75px 46px 1fr; }
  .view .col:last-child { margin-left: 4px; } .view .name { padding-right: 4px; }
  .comment { width: 135px; } .comment .body { grid-template-columns: 79px 45px; } .comment .name { padding-right: 3px; }
  .create { width: 160px; } .create .body { grid-template-columns: 50px 1fr; } .create .name { padding-right: 4px; }
  .protect { width: 51px; } .protect .body { padding-right: 2px; } .protect .name { padding-right: 3px; }
  .links { width: 91px; padding-left: 8px; } .links .name { padding-right: 10px; }
  .insert { width: 137px; padding-left: 8px; } .insert .name { padding-right: 11px; }
  .big { height: 69px; display: flex; flex-direction: column; align-items: center; }
  .big.on { background: #c2d5f2; }
  .bigic { height: 39px; display: flex; align-items: center; }
  .lab { height: 16px; display: flex; align-items: center; white-space: nowrap; }
  .arrow { height: 8px; }
  .col { display: flex; flex-direction: column; margin-top: 1px; }
  .row { height: 22px; display: flex; align-items: center; }
  .slot { width: 20px; flex: none; display: flex; justify-content: flex-start; }
  .drop { margin-left: 6px; }
  .zoom { display: flex; align-items: center; height: 22px; gap: 5px; }
  .box { box-sizing: border-box; width: 78px; height: 22px; margin-top: -1px; margin-left: 1px; margin-right: -1px; border: 1px solid #a9a9a9; background: #fff; display: flex; align-items: center; justify-content: space-between; padding: 0 4px; color: #000; font-size: 12.5px; }
  .fold { flex: 1; display: flex; justify-content: flex-end; align-items: flex-end; padding: 0 9px 7px 0; }
  .tabs { height: 32px; box-sizing: border-box; border-bottom: 1px solid #a6a6a6; display: flex; color: #222; }
  .tab { position: relative; margin-top: 7px; height: 25px; display: flex; align-items: center; padding-top: 5px; box-sizing: border-box; }
  .tab .t { position: relative; }
  .shape { position: absolute; left: 0; top: 0; }
  .start { margin-left: 37px; width: 151px; padding-left: 17px; }
  .cur { width: 194px; padding-left: 17px; gap: 17px; }
  .cur .ic { position: relative; }
  .more { flex: 1; display: flex; justify-content: flex-end; align-items: center; padding: 3px 6px 0 0; }
  .ad { width: 161px; height: 31px; background: #f78c22; color: #fff; display: flex; box-sizing: border-box; padding-left: 5px; line-height: 14px; }
  .adtext { width: 105px; display: flex; flex-direction: column; align-items: flex-start; padding-top: 2px; }
  .adlogo { display: grid; grid-template-columns: 14px 37px; grid-template-rows: 14px 13px; padding-top: 2px; line-height: 12px; font-size: 11.5px; }
  .chip { background: #fff; color: #f78c22; border-radius: 2px; height: 13px; }
  .pdf { grid-column: 1 / 3; margin-left: 5px; width: 27px; text-align: center; }
  .word { width: 35px; text-align: center; height: 13px; }
  main { height: 522px; display: flex; }
  aside { width: 36px; display: flex; flex-direction: column; }
  .open { height: 41px; padding: 8px 0 0 23px; box-sizing: border-box; }
  .si { height: 45.3px; display: grid; place-content: center; }
  .canvas { flex: 1; background: #ababab; position: relative; overflow: hidden; display: flex; }
  .grip { width: 4px; height: 44px; margin: 201px 0 0 3px; background: linear-gradient(#555 1px, transparent 1px) 0 0 / 1px 3px no-repeat repeat, linear-gradient(#555 1px, transparent 1px) 2px 0 / 1px 3px no-repeat repeat; background-repeat: no-repeat repeat; }
  .page { margin-left: 347px; width: 612px; height: 522px; position: relative; overflow: hidden; }
  .scan { position: absolute; inset: 0; }
  .text { position: relative; padding-left: 45px; margin-top: -6.5px; font: 11.2px/12.5px "Liberation Serif", serif; color: #383838; -webkit-text-stroke: .15px #383838; filter: blur(.35px); display: flex; flex-direction: column; gap: 3.15px; }
  .para { display: grid; grid-template-columns: 20px 1fr; }
  .para.sub { padding-left: 20px; grid-template-columns: 21px 1fr; }
  .para.sh { margin-left: 1px; }
  .line { height: 12.5px; white-space: nowrap; }
  .table { width: 234px; height: 114px; margin: -3.5px 0 -.7px 121px; box-sizing: border-box; border: 1px solid #555; display: flex; flex-direction: column; font-style: italic; }
  .tr { flex: 1; display: grid; grid-template-columns: 124px 1fr; border-top: 1px solid #666; line-height: 17px; max-height: 15px; }
  .tr span:first-child:not(.t) { border-right: 1px solid #555; }
  .tr > span { padding-left: 5px; height: 15px; box-sizing: border-box; }
  .tr.th { border-top: 0; font-weight: bold; font-style: normal; max-height: 16px; }
  .th > span { text-align: center; padding: 0; height: 16px; }
  .mark { position: absolute; left: 971px; top: 454px; width: 330px; color: #a7a7a7; font-size: 14px; line-height: 20px; }
  .m1 { font-size: 20px; line-height: 25px; }
  .scroll { width: 17px; display: flex; flex-direction: column; }
  .split { height: 9px; margin-top: 1px; border: 1px solid #666; box-sizing: border-box; background: #e0e0e0; }
  .arr { height: 17px; display: grid; place-content: center; }
  .arr:last-child { margin-top: auto; }
  .thumb { height: 17px; margin-top: 220px; background: #cdcdcd; }
  .status { height: 29px; display: grid; align-items: center; padding-left: 552px; grid-template-columns: 27px 19px 124px 23px 24px 26px 234px 20px 30px 26px 46px 53px 10px 22px 96px 34px; color: #333; }
  .pg { box-sizing: border-box; width: 115px; height: 20px; border: 1px solid #a9a9a9; background: #fff; display: flex; align-items: center; justify-content: space-between; padding: 0 4px; color: #000; font-size: 12.5px; }
  .selv { width: 24px; height: 18px; background: #c2d5f2; display: grid; place-content: center; }
  .taskbar { height: 40px; display: flex; background: linear-gradient(90deg, #14130e 0, #1a1912 400px, #343434 490px, #363636 100%); color: #fff; }
  .sys { width: 48px; display: grid; place-content: center; }
  .apps { display: flex; padding-left: 2.5px; width: 890px; box-sizing: border-box; }
  .appi { width: 47px; flex: none; display: grid; place-content: center; position: relative; }
  .appi.late { width: 46px; }
  .appi.run::after { content: ""; position: absolute; left: 4px; right: 5px; bottom: 0; height: 2px; background: #76b9ed; }
  .appi.multi::after { background: linear-gradient(90deg, #76b9ed 30px, #5689b3 30px); }
  .appi.active { background: #5e5e5e; width: 45px; }
  .appi.active::after { left: 0; right: 0; }
  .tray { flex: 1; display: grid; align-items: center; padding-left: 26px; grid-template-columns: 37px 22px 24px 24px 24px 26px 36px 72px 36px 5px; }
  .clock { width: 54px; display: flex; flex-direction: column; align-items: center; line-height: 18px; }
  .act { margin-top: 4px; }
  .desk { width: 1px; height: 40px; background: #777; }
</style>
